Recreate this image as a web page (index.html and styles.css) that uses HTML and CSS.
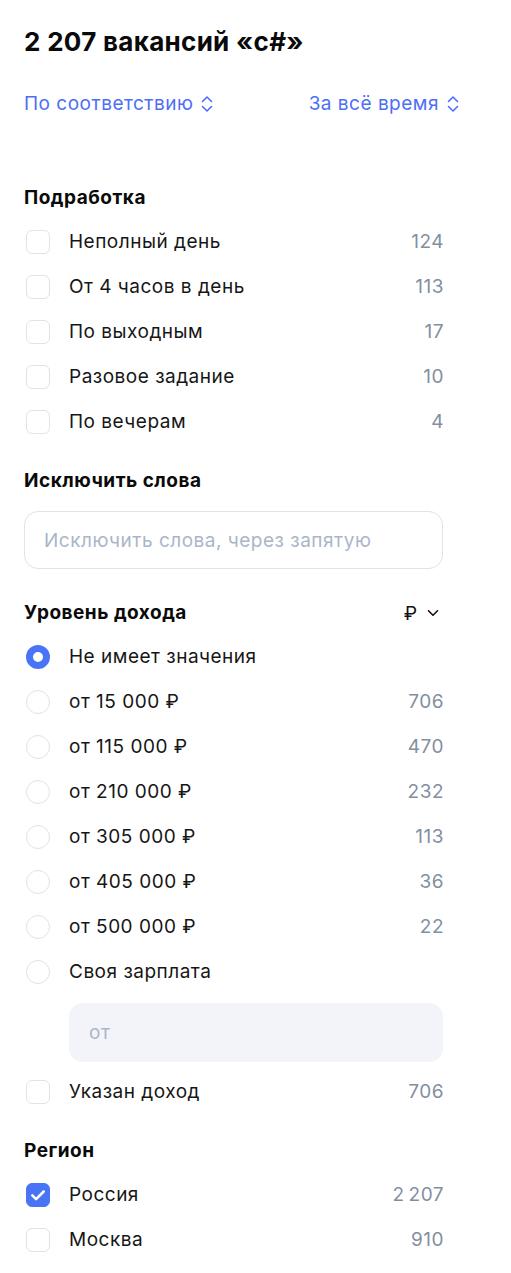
FILE: index.html
```html
<!DOCTYPE html>
<html lang="ru">
<head>
<meta charset="utf-8">
<link rel="stylesheet" href="styles.css">
</head>
<body>
<div class="page">
  <h1 class="title">2 207 вакансий «c#»</h1>
  <div class="sorts">
    <button class="sort">По соответствию
      <svg class="updown" viewBox="0 0 12 18" width="12" height="18"><path d="M1.5 6.5 6 2l4.5 4.5M1.5 11.5 6 16l4.5-4.5" fill="none" stroke="currentColor" stroke-width="1.6" stroke-linecap="round" stroke-linejoin="round"/></svg>
    </button>
    <button class="sort">За всё время
      <svg class="updown" viewBox="0 0 12 18" width="12" height="18"><path d="M1.5 6.5 6 2l4.5 4.5M1.5 11.5 6 16l4.5-4.5" fill="none" stroke="currentColor" stroke-width="1.6" stroke-linecap="round" stroke-linejoin="round"/></svg>
    </button>
  </div>

  <section class="section first">
    <h2 class="heading">Подработка</h2>
    <label class="row"><span class="box"></span><span class="label">Неполный день</span><span class="count">124</span></label>
    <label class="row"><span class="box"></span><span class="label">От 4 часов в день</span><span class="count">113</span></label>
    <label class="row"><span class="box"></span><span class="label">По выходным</span><span class="count">17</span></label>
    <label class="row"><span class="box"></span><span class="label">Разовое задание</span><span class="count">10</span></label>
    <label class="row"><span class="box"></span><span class="label">По вечерам</span><span class="count">4</span></label>
  </section>

  <section class="section">
    <h2 class="heading words">Исключить слова</h2>
    <div class="field">Исключить слова, через запятую</div>
  </section>

  <section class="section income">
    <div class="heading-row">
      <h2 class="heading">Уровень дохода</h2>
      <span class="currency">₽
        <svg viewBox="0 0 12 8" width="12" height="8"><path d="M1.5 1.8 6 6.2l4.5-4.4" fill="none" stroke="currentColor" stroke-width="1.6" stroke-linecap="round" stroke-linejoin="round"/></svg>
      </span>
    </div>
    <label class="row"><span class="radio on"></span><span class="label">Не имеет значения</span></label>
    <label class="row"><span class="radio"></span><span class="label">от 15 000 ₽</span><span class="count">706</span></label>
    <label class="row"><span class="radio"></span><span class="label">от 115 000 ₽</span><span class="count">470</span></label>
    <label class="row"><span class="radio"></span><span class="label">от 210 000 ₽</span><span class="count">232</span></label>
    <label class="row"><span class="radio"></span><span class="label">от 305 000 ₽</span><span class="count">113</span></label>
    <label class="row"><span class="radio"></span><span class="label">от 405 000 ₽</span><span class="count">36</span></label>
    <label class="row"><span class="radio"></span><span class="label">от 500 000 ₽</span><span class="count">22</span></label>
    <label class="row"><span class="radio"></span><span class="label">Своя зарплата</span></label>
    <div class="salary">от</div>
    <label class="row"><span class="box"></span><span class="label">Указан доход</span><span class="count">706</span></label>
  </section>

  <section class="section">
    <h2 class="heading">Регион</h2>
    <label class="row"><span class="box checked"><svg viewBox="0 0 24 24" width="24" height="24"><path d="M6.3 12.4l3.8 3.7 7.6-7.6" fill="none" stroke="#fff" stroke-width="2.5" stroke-linecap="round" stroke-linejoin="round"/></svg></span><span class="label">Россия</span><span class="count">2&#8201;207</span></label>
    <label class="row"><span class="box"></span><span class="label">Москва</span><span class="count">910</span></label>
  </section>
</div>
</body>
</html>
```

FILE: styles.css
```css
* { box-sizing: border-box; }
html, body { margin: 0; padding: 0; background: #fff; }
body {
  font-family: Inter, "Noto Sans", "Liberation Sans", sans-serif;
  color: #111;
  letter-spacing: 0.5px;
}
.page {
  width: 443px;
  padding: 27px 0 20px 24px;
}
.title {
  margin: 0;
  font-size: 26px;
  line-height: 30px;
  font-weight: 700;
  color: #0a0a0a;
  letter-spacing: 0.3px;
}
.sorts {
  margin-top: 35px;
  margin-right: -16px;
  display: flex;
  justify-content: space-between;
}
.sort {
  background: none;
  border: 0;
  padding: 0;
  font: inherit;
  font-size: 19px;
  line-height: 24px;
  letter-spacing: 0.5px;
  color: #4d6ef6;
  display: flex;
  align-items: center;
  gap: 8px;
  cursor: pointer;
}
.updown { display: block; }
.section { margin-top: 24px; }
.section.first { margin-top: 69px; }
.heading {
  margin: 0 0 8px;
  font-size: 19px;
  line-height: 26px;
  font-weight: 700;
  color: #0a0a0a;
}
.heading.words { margin-bottom: 17px; }
.row {
  height: 45px;
  display: flex;
  align-items: center;
  font-size: 19px;
}
.box, .radio {
  flex: none;
  width: 24px;
  height: 24px;
  margin-left: 2px;
  border: 1px solid #dfe3ea;
  border-radius: 6px;
  background: #fff;
}
.box.checked {
  background: #4a74f6;
  border-color: #4a74f6;
  display: flex;
  align-items: center;
  justify-content: center;
}
.box.checked svg { display: block; margin: -1px; }
.radio { border-radius: 50%; }
.radio.on {
  border: 7px solid #4a74f6;
}
.label {
  margin-left: 19px;
  flex: 1;
  color: #161616;
}
.count {
  color: #838fa1;
  margin-right: -1px;
}
.field {
  height: 58px;
  border: 1px solid #dfe3ea;
  border-radius: 14px;
  display: flex;
  align-items: center;
  padding-left: 19px;
  font-size: 19px;
  color: #aab6c8;
}
.section.income { margin-top: 31px; }
.heading-row {
  display: flex;
  justify-content: space-between;
  align-items: center;
  margin-bottom: 8px;
}
.heading-row .heading { margin: 0; }
.currency {
  display: flex;
  align-items: center;
  gap: 10px;
  font-size: 19px;
  letter-spacing: 0;
  color: #111;
  padding-right: 4px;
}
.currency svg { display: block; }
.salary {
  margin: 9px 0 7px 45px;
  height: 59px;
  background: #f2f4f9;
  border-radius: 14px;
  display: flex;
  align-items: center;
  padding-left: 20px;
  font-size: 19px;
  color: #aab6c8;
}
```
